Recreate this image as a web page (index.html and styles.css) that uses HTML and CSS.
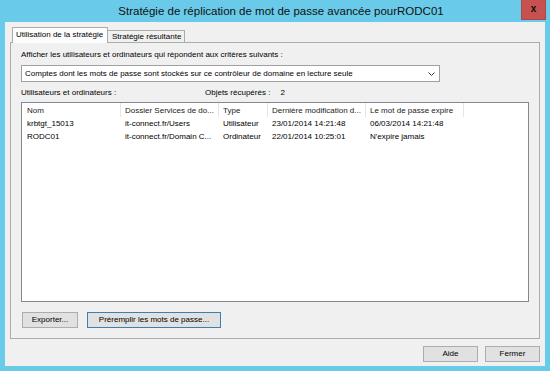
FILE: index.html
```html
<!DOCTYPE html>
<html lang="fr">
<head>
<meta charset="utf-8">
<title>Stratégie de réplication</title>
<link rel="stylesheet" href="styles.css">
</head>
<body>
<div class="window">
  <div class="titlebar">
    <div class="title">Stratégie de réplication de mot de passe avancée pourRODC01</div>
    <div class="close">x</div>
  </div>
  <div class="client">
    <div class="tabs">
      <div class="tab active">Utilisation de la stratégie</div>
      <div class="tab">Stratégie résultante</div>
    </div>
    <div class="panel">
      <div class="lbl">Afficher les utilisateurs et ordinateurs qui répondent aux critères suivants :</div>
      <div class="combo">
        <span class="combo-text">Comptes dont les mots de passe sont stockés sur ce contrôleur de domaine en lecture seule</span>
        <svg class="chev" width="7" height="4" viewBox="0 0 7 4"><polyline points="0.5,0.5 3.5,3.5 6.5,0.5" fill="none" stroke="#333" stroke-width="1"/></svg>
      </div>
      <div class="labels">
        <span class="lab-left">Utilisateurs et ordinateurs :</span>
        <span class="lab-count">Objets récupérés :</span>
        <span class="lab-num">2</span>
      </div>
      <div class="list">
        <div class="lv-row lv-head">
          <div class="c">Nom</div>
          <div class="c">Dossier Services de do...</div>
          <div class="c">Type</div>
          <div class="c">Dernière modification d...</div>
          <div class="c">Le mot de passe expire</div>
          <div class="c last"></div>
        </div>
        <div class="lv-row">
          <div class="c">krbtgt_15013</div>
          <div class="c">it-connect.fr/Users</div>
          <div class="c">Utilisateur</div>
          <div class="c">23/01/2014 14:21:48</div>
          <div class="c">06/03/2014 14:21:48</div>
          <div class="c last"></div>
        </div>
        <div class="lv-row">
          <div class="c">RODC01</div>
          <div class="c">it-connect.fr/Domain C...</div>
          <div class="c">Ordinateur</div>
          <div class="c">22/01/2014 10:25:01</div>
          <div class="c">N'expire jamais</div>
          <div class="c last"></div>
        </div>
      </div>
      <div class="panel-buttons">
        <div class="btn btn-export">Exporter...</div>
        <div class="btn btn-def btn-prefill">Préremplir les mots de passe...</div>
      </div>
    </div>
    <div class="footer">
      <div class="btn btn-foot">Aide</div>
      <div class="btn btn-foot">Fermer</div>
    </div>
  </div>
</div>
</body>
</html>
```

FILE: styles.css
```css
* { box-sizing: border-box; }
html, body { margin: 0; padding: 0; }
body {
  width: 550px;
  height: 371px;
  overflow: hidden;
  font-family: "Liberation Sans", Arial, sans-serif;
  font-size: 8px;
  color: #000;
}
.window {
  width: 550px;
  height: 371px;
  background: #69caea;
  padding: 0 5px 5px 5px;
  display: flex;
  flex-direction: column;
}
.titlebar {
  height: 22px;
  display: flex;
  align-items: flex-start;
}
.title {
  flex: 1;
  text-align: center;
  padding-left: 36px;
  font-size: 11.5px;
  line-height: 22px;
  color: #111;
}
.close {
  width: 25px;
  height: 20px;
  margin-right: -1px;
  background: #c75050;
  border: 1px solid #a94a4a;
  border-top: none;
  color: #111;
  font-weight: bold;
  font-size: 10px;
  line-height: 17px;
  text-align: center;
}
.client {
  flex: 1;
  background: #f0f0f0;
  padding: 5px 5px 4px 5px;
  display: flex;
  flex-direction: column;
}
.tabs {
  height: 15px;
  display: flex;
  align-items: flex-end;
  padding-left: 2px;
}
.tab {
  height: 12px;
  line-height: 11px;
  padding: 0 4px;
  border: 1px solid #acacac;
  border-bottom: none;
  background: #f0f0f0;
  white-space: nowrap;
}
.tab.active {
  height: 16px;
  line-height: 14px;
  margin-bottom: -1px;
  position: relative;
  z-index: 1;
  width: 96px;
  padding: 0 3px;
  background: #fcfcfc;
}
.tab + .tab { margin-left: -1px; width: 78px; }
.panel {
  flex: 1;
  border: 1px solid #acacac;
  padding: 6px 10px 10px 10px;
  display: flex;
  flex-direction: column;
}
.lbl { line-height: 12px; white-space: nowrap; }
.combo {
  margin-top: 4px;
  width: 419px;
  height: 17px;
  border: 1px solid #a0a0a0;
  background: #fff;
  display: flex;
  align-items: center;
  padding: 0 4px 0 3px;
}
.combo-text { flex: 1; white-space: nowrap; }
.chev { display: block; }
.labels {
  margin-top: 5px;
  line-height: 12px;
  display: flex;
}
.lab-left { width: 184px; }
.lab-num { margin-left: 10px; }
.list {
  margin-top: 3px;
  flex: 1;
  border: 1px solid #828790;
  background: #fff;
}
.lv-row {
  display: grid;
  grid-template-columns: 99px 98px 49px 98px 98px 1fr;
  height: 13px;
  line-height: 13px;
}
.lv-head {
  height: 14px;
  line-height: 15px;
  color: #222;
}
.lv-head .c { border-right: 1px solid #e5e5e5; }
.lv-head .c.last { border-right: none; }
.c {
  padding-left: 5px;
  white-space: nowrap;
  overflow: hidden;
}
.lv-head .c + .c { padding-left: 4px; }
.lv-row .c + .c { padding-left: 4px; }
.panel-buttons {
  margin-top: 10px;
  display: flex;
}
.btn {
  height: 16px;
  line-height: 14px;
  text-align: center;
  border: 1px solid #adadad;
  background: #e1e1e1;
  white-space: nowrap;
}
.btn-export { width: 56px; margin-left: 1px; }
.btn-prefill { width: 134px; margin-left: 9px; }
.btn-def { border-color: #3c7fb1; }
.footer {
  padding-top: 7px;
  display: flex;
  justify-content: flex-end;
  gap: 7px;
}
.btn-foot { width: 55px; }
```
